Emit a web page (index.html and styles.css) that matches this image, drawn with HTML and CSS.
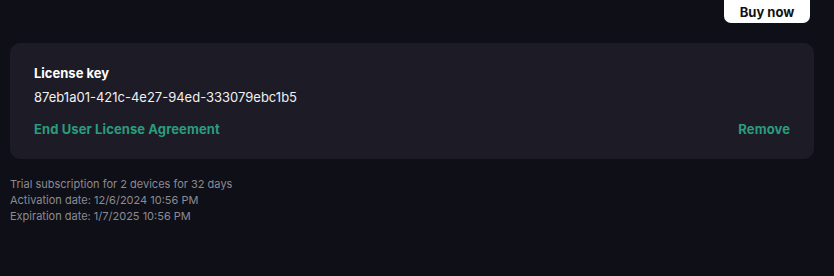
FILE: index.html
```html
<!DOCTYPE html>
<html>
<head>
<meta charset="utf-8">
<link rel="stylesheet" href="styles.css">
</head>
<body>
<div class="page">
  <div class="topbar">
    <button class="buy">Buy now</button>
  </div>
  <div class="card">
    <div class="label">License key</div>
    <div class="key">87eb1a01-421c-4e27-94ed-333079ebc1b5</div>
    <div class="links">
      <a class="link">End User License Agreement</a>
      <a class="link">Remove</a>
    </div>
  </div>
  <div class="info">
    <div>Trial subscription for 2 devices for 32 days</div>
    <div>Activation date: 12/6/2024 10:56 PM</div>
    <div>Expiration date: 1/7/2025 10:56 PM</div>
  </div>
</div>
</body>
</html>
```
FILE: styles.css
```css
html, body {
  margin: 0;
  padding: 0;
  background: #0f0f17;
  font-family: Inter, "Noto Sans", sans-serif;
}
.page {
  width: 834px;
  height: 276px;
  padding: 0 20px 0 10px;
  box-sizing: border-box;
}
.topbar {
  display: flex;
  justify-content: flex-end;
  height: 43px;
  align-items: flex-start;
}
.buy {
  margin-top: -6px;
  margin-right: 4px;
  width: 86px;
  height: 29px;
  padding: 6px 0 0;
  border: none;
  border-radius: 7px;
  background: #ffffff;
  color: #111;
  font-family: inherit;
  font-size: 13px;
  font-weight: 700;
}
.card {
  background: #1d1c26;
  border-radius: 10px;
  padding: 21px 24px 20px;
  height: 116px;
  box-sizing: border-box;
}
.label {
  color: #fff;
  font-size: 13px;
  font-weight: 700;
  line-height: 18px;
}
.key {
  color: #f0f0f0;
  font-size: 13px;
  line-height: 18px;
  margin-top: 6px;
}
.links {
  display: flex;
  justify-content: space-between;
  margin-top: 14px;
}
.link {
  color: #2a9c7e;
  font-size: 13px;
  font-weight: 700;
  line-height: 18px;
  letter-spacing: 0.1px;
}
.info {
  margin-top: 17px;
  color: #8b8b93;
  font-size: 11px;
  line-height: 16px;
}
```
